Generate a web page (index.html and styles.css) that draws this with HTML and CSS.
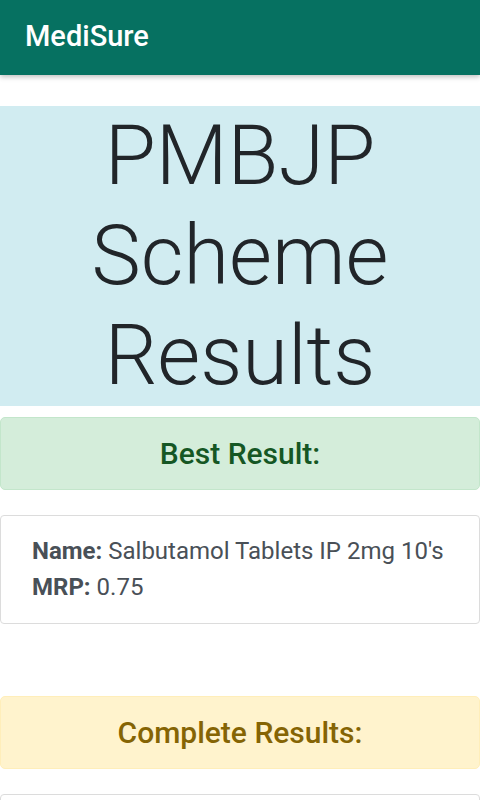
FILE: index.html
```html
<!DOCTYPE html>
<html>
<head>
    <title>MediSure</title>
    <link rel="stylesheet" href="styles.css">
</head>
<body>
    <nav class="navbar">
        <span class="brand">MediSure</span>
    </nav>
    <div class="page">
        <h1 class="banner">PMBJP Scheme Results</h1>
        <div class="alert alert-success">
            <h4>Best Result:</h4>
        </div>
        <div class="card">
            <p><b>Name:</b> Salbutamol Tablets IP 2mg 10's</p>
            <p><b>MRP:</b> 0.75</p>
        </div>
        <div class="alert alert-warning complete">
            <h4>Complete Results:</h4>
        </div>
        <div class="card">
            <p><b>Name:</b> Salbutamol Tablets IP 2mg 10's</p>
            <p><b>MRP:</b> 0.75</p>
        </div>
    </div>
</body>
</html>
```

FILE: styles.css
```css
body {
    margin: 0;
    font-family: Roboto, 'Liberation Sans', sans-serif;
    color: #212529;
    background: #fff;
}
.navbar {
    height: 75px;
    background: #067161;
    display: flex;
    align-items: center;
    padding: 0 25px;
    box-shadow: 0 2px 5px rgba(0,0,0,0.25);
}
.brand {
    color: #fff;
    font-size: 29px;
    font-weight: 500;
    margin-top: -4px;
}
.page {
    padding-top: 31px;
}
.banner {
    margin: 0;
    background: #d1ecf1;
    text-align: center;
    font-size: 83px;
    line-height: 100px;
    font-weight: 300;
    color: #212529;
}
.alert {
    margin-top: 11px;
    border: 1px solid;
    border-radius: 5px;
    height: 71px;
    display: flex;
    align-items: center;
    justify-content: center;
}
.alert h4 {
    margin: 0;
    font-size: 30px;
    font-weight: 500;
}
.alert-success {
    background: #d4edda;
    border-color: #c3e6cb;
    color: #155724;
}
.alert-warning {
    background: #fff3cd;
    border-color: #ffeeba;
    color: #856404;
}
.alert.complete {
    margin-top: 72px;
}
.card {
    margin-top: 25px;
    border: 1px solid #dcdcdc;
    border-radius: 4px;
    padding: 17px 31px 18px;
}
.card p {
    margin: 0;
    font-size: 24px;
    line-height: 36px;
    color: #495057;
}
.card b {
    font-weight: 700;
}
```
